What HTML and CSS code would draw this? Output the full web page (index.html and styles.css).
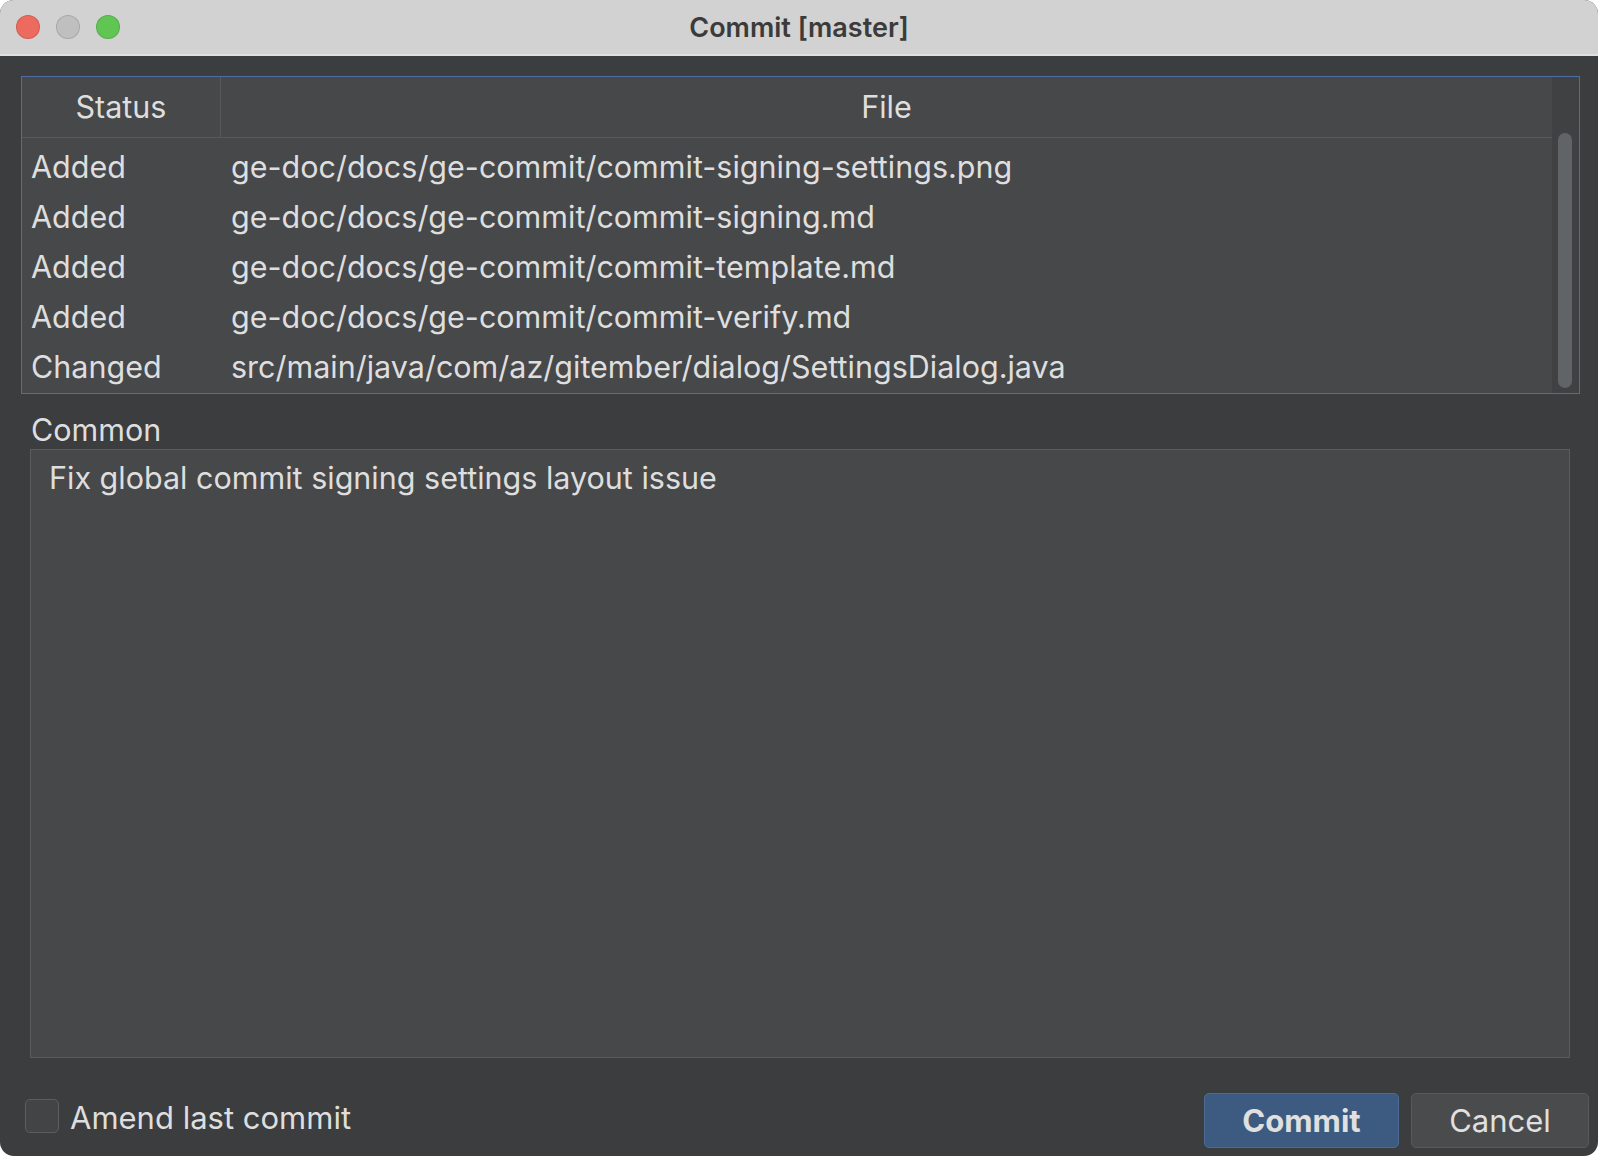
FILE: index.html
```html
<!DOCTYPE html>
<html lang="en">

<head>
  <meta charset="UTF-8">
  <meta name="viewport" content="width=device-width, initial-scale=1.0">
  <title>Commit [master]</title>
  <link rel="stylesheet" href="styles.css">
</head>

<body>
  <div class="window">
    <div class="titlebar">
      <div class="lights">
        <span class="light light_close"></span>
        <span class="light light_min"></span>
        <span class="light light_max"></span>
      </div>
      <span class="title">Commit [master]</span>
    </div>

    <div class="main">
      <div class="files">
        <div class="files_table">
          <div class="files_header">
            <span class="col_status">Status</span>
            <span class="col_file">File</span>
          </div>
          <div class="files_body">
            <div class="file_row">
              <span class="col_status">Added</span>
              <span class="col_file">ge-doc/docs/ge-commit/commit-signing-settings.png</span>
            </div>
            <div class="file_row">
              <span class="col_status">Added</span>
              <span class="col_file">ge-doc/docs/ge-commit/commit-signing.md</span>
            </div>
            <div class="file_row">
              <span class="col_status">Added</span>
              <span class="col_file">ge-doc/docs/ge-commit/commit-template.md</span>
            </div>
            <div class="file_row">
              <span class="col_status">Added</span>
              <span class="col_file">ge-doc/docs/ge-commit/commit-verify.md</span>
            </div>
            <div class="file_row">
              <span class="col_status">Changed</span>
              <span class="col_file">src/main/java/com/az/gitember/dialog/SettingsDialog.java</span>
            </div>
          </div>
        </div>
        <div class="scrollbar">
          <div class="scrollbar_thumb"></div>
        </div>
      </div>

      <div class="common_label">Common</div>
      <div class="message">Fix global commit signing settings layout issue</div>
    </div>

    <div class="footer">
      <label class="amend">
        <span class="checkbox"></span>
        <span class="amend_text">Amend last commit</span>
      </label>
      <div class="buttons">
        <button class="btn btn_commit" type="button">Commit</button>
        <button class="btn btn_cancel" type="button">Cancel</button>
      </div>
    </div>
  </div>
</body>

</html>
```

FILE: styles.css
```css
/* 기본 스타일 */
body {
  margin: 0;
  padding: 0;
  background-color: #fff;
  font-family: Inter, "Liberation Sans", sans-serif;
  color: #dedede;
}

.window {
  width: 1598px;
  height: 1156px;
  border-radius: 14px;
  overflow: hidden;
  background-color: #3c3d3f;
  display: flex;
  flex-direction: column;
}

/* 타이틀바 */
.titlebar {
  height: 54px;
  flex-shrink: 0;
  background-color: #d1d2d1;
  border-bottom: 2px solid #e0e0e0;
  display: flex;
  align-items: center;
  justify-content: center;
  position: relative;
}

.lights {
  position: absolute;
  left: 16px;
  top: 15px;
  display: flex;
  gap: 16px;
}

.light {
  width: 22px;
  height: 22px;
  border-radius: 50%;
  border: 1px solid rgba(0, 0, 0, 0.12);
}

.light_close {
  background-color: #ed6a5e;
}

.light_min {
  background-color: #bfbfbf;
}

.light_max {
  background-color: #61c554;
}

.title {
  font-size: 27px;
  font-weight: 600;
  color: #3b3b3b;
  margin-top: 1px;
}

/* 파일 목록 */
.main {
  padding: 20px 18px 0 21px;
}

.files {
  height: 318px;
  box-sizing: border-box;
  border: 1px solid #4c6ea3;
  background-color: #47484a;
  display: flex;
}

.files_table {
  flex: 1;
}

.files_header,
.file_row {
  display: grid;
  grid-template-columns: 199px 1fr;
  font-size: 30.5px;
}

.files_header {
  height: 60px;
  line-height: 60px;
  border-bottom: 1px solid #58595b;
  text-align: center;
}

.files_header .col_status {
  border-right: 1px solid #58595b;
}

.files_body {
  padding-top: 4px;
}

.file_row {
  height: 50px;
  line-height: 50px;
  white-space: nowrap;
}

.file_row .col_status {
  padding-left: 9px;
}

.file_row .col_file {
  padding-left: 10px;
}

.scrollbar {
  width: 27px;
  background-color: #3f4143;
  padding: 56px 0 5px 6px;
  box-sizing: border-box;
}

.scrollbar_thumb {
  width: 14px;
  height: 100%;
  border-radius: 7px;
  background-color: #606467;
}

/* 커밋 메시지 */
.common_label {
  margin-top: 18px;
  padding-left: 10px;
  height: 36px;
  line-height: 36px;
  font-size: 30.5px;
}

.message {
  margin: 1px 10px 0 9px;
  height: 609px;
  box-sizing: border-box;
  border: 1px solid #5b5c5e;
  background-color: #47484a;
  padding: 10px 18px;
  font-size: 30.5px;
  line-height: 36px;
}

/* 하단 */
.footer {
  display: flex;
  justify-content: space-between;
  align-items: flex-start;
  padding: 35px 9px 8px 25px;
}

.amend {
  display: flex;
  align-items: flex-start;
  gap: 11px;
  margin-top: 6px;
}

.checkbox {
  width: 34px;
  height: 34px;
  box-sizing: border-box;
  border: 1px solid #5c5d5f;
  border-radius: 5px;
  background-color: #434446;
}

.amend_text {
  font-size: 31px;
  line-height: 34px;
  padding-top: 2px;
}

.buttons {
  display: flex;
  gap: 12px;
}

.btn {
  height: 55px;
  box-sizing: border-box;
  border-radius: 5px;
  font-family: Inter, "Liberation Sans", sans-serif;
  font-size: 31px;
  color: #e0e0e0;
  padding: 0;
}

.btn_commit {
  width: 195px;
  font-weight: bold;
  background-color: #3d5a80;
  border: 1px solid #4d6b94;
}

.btn_cancel {
  width: 178px;
  background-color: #4a4b4d;
  border: 1px solid #58595b;
}
```
